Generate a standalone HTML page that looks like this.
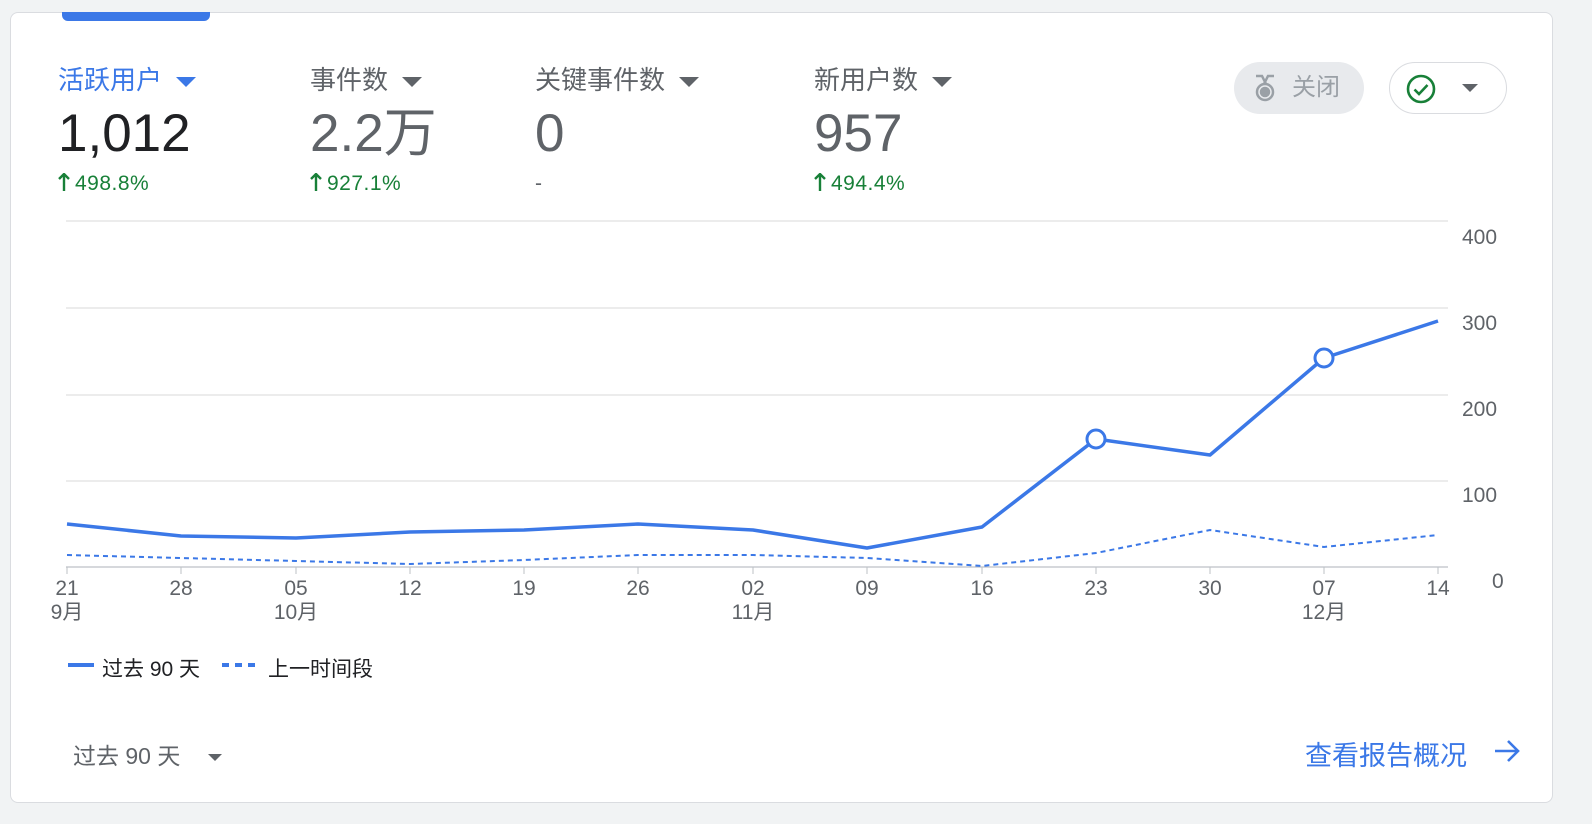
<!DOCTYPE html>
<html><head><meta charset="utf-8"><style>
body{margin:0;width:1592px;height:824px;background:#f1f3f4;font-family:"Liberation Sans","Noto Sans CJK SC",sans-serif;position:relative;overflow:hidden}
.card{position:absolute;left:10px;top:12px;width:1541px;height:789px;background:#fff;border:1px solid #dadce0;border-radius:8px}
.tab{position:absolute;left:62px;top:12px;width:148px;height:9px;background:#3b78e7;border-radius:0 0 6px 6px}
.m{position:absolute;top:60px}
.m .t{font-size:26px;color:#5f6368;white-space:nowrap}
.m .t.a{color:#3b78e7}
.caret{display:inline-block;width:0;height:0;border-left:10px solid transparent;border-right:10px solid transparent;border-top:10px solid #5f6368;margin-left:14px;vertical-align:middle}
.a .caret{border-top-color:#3b78e7}
.m .v{font-size:53px;color:#5f6368;margin-top:8px;line-height:58px}
.m .d{font-size:21px;color:#188038;margin-top:9px;letter-spacing:.5px;white-space:nowrap}
.m .d svg{vertical-align:-1px;margin-right:5px}
.ax{position:absolute;font-size:21px;color:#5f6368;text-align:center;line-height:24px}
</style></head><body>
<div class="card"></div>
<div class="tab"></div>
<div class="m" style="left:58px"><div class="t a">活跃用户<span class="caret"></span></div><div class="v" style="color:#202124">1,012</div><div class="d"><svg width="12" height="18" viewBox="0 0 12 18"><path d="M6 1v17M1 6l5-5 5 5" fill="none" stroke="#188038" stroke-width="2.4"/></svg>498.8%</div></div>
<div class="m" style="left:310px"><div class="t">事件数<span class="caret"></span></div><div class="v">2.2万</div><div class="d"><svg width="12" height="18" viewBox="0 0 12 18"><path d="M6 1v17M1 6l5-5 5 5" fill="none" stroke="#188038" stroke-width="2.4"/></svg>927.1%</div></div>
<div class="m" style="left:535px"><div class="t">关键事件数<span class="caret"></span></div><div class="v">0</div><div class="d" style="color:#5f6368">-</div></div>
<div class="m" style="left:814px"><div class="t">新用户数<span class="caret"></span></div><div class="v">957</div><div class="d"><svg width="12" height="18" viewBox="0 0 12 18"><path d="M6 1v17M1 6l5-5 5 5" fill="none" stroke="#188038" stroke-width="2.4"/></svg>494.4%</div></div>
<div style="position:absolute;left:1234px;top:62px;width:130px;height:52px;border-radius:26px;background:#e8eaed;color:#9aa0a6;font-size:24px;line-height:52px">
<svg style="position:absolute;left:18px;top:12px" width="26" height="28" viewBox="0 0 26 28" fill="none" stroke="#9aa0a6" stroke-width="2.5"><path d="M4 2h6l4 8M22 2h-6l-4 8"/><circle cx="13" cy="18" r="8"/><circle cx="13" cy="18" r="4" fill="#9aa0a6"/></svg>
<span style="position:absolute;left:58px">关闭</span></div>
<div style="position:absolute;left:1389px;top:62px;width:116px;height:50px;border-radius:26px;border:1.5px solid #dadce0;background:#fff">
<svg style="position:absolute;left:16px;top:11px" width="30" height="30" viewBox="0 0 30 30" fill="none" stroke="#188038" stroke-width="2.6"><circle cx="15" cy="15" r="13"/><path d="M8.5 15.5l4.5 4.5 8.5-9"/></svg>
<span class="caret" style="position:absolute;left:72px;top:21px;margin:0;border-width:8px 8px 0"></span></div>
<svg style="position:absolute;left:0;top:0" width="1592" height="824">
<g stroke="#e0e0e0" stroke-width="1.3">
<line x1="66" y1="221" x2="1448" y2="221"/><line x1="66" y1="308" x2="1448" y2="308"/><line x1="66" y1="395" x2="1448" y2="395"/><line x1="66" y1="481" x2="1448" y2="481"/></g>
<line x1="66" y1="567" x2="1448" y2="567" stroke="#bdc1c6" stroke-width="1.3"/>
<g stroke="#bdc1c6"><line x1="67" y1="567" x2="67" y2="574"/><line x1="181" y1="567" x2="181" y2="574"/><line x1="296" y1="567" x2="296" y2="574"/><line x1="410" y1="567" x2="410" y2="574"/><line x1="524" y1="567" x2="524" y2="574"/><line x1="638" y1="567" x2="638" y2="574"/><line x1="753" y1="567" x2="753" y2="574"/><line x1="867" y1="567" x2="867" y2="574"/><line x1="982" y1="567" x2="982" y2="574"/><line x1="1096" y1="567" x2="1096" y2="574"/><line x1="1210" y1="567" x2="1210" y2="574"/><line x1="1324" y1="567" x2="1324" y2="574"/><line x1="1438" y1="567" x2="1438" y2="574"/></g>
<polyline fill="none" stroke="#3b78e7" stroke-width="2" stroke-dasharray="5,4" points="67,555 181,558 296,561 410,564 524,560 638,555 753,555 867,558 982,566 1096,553 1210,530 1324,547 1438,535"/>
<polyline fill="none" stroke="#3b78e7" stroke-width="3.5" stroke-linejoin="round" points="67,524 181,536 296,538 410,532 524,530 638,524 753,530 867,548 982,527 1096,439 1210,455 1324,358 1438,321"/>
<circle cx="1096" cy="439" r="9" fill="#fff" stroke="#3b78e7" stroke-width="3"/>
<circle cx="1324" cy="358" r="9" fill="#fff" stroke="#3b78e7" stroke-width="3"/>
<line x1="68" y1="665" x2="94" y2="665" stroke="#3b78e7" stroke-width="4"/>
<line x1="222" y1="665" x2="256" y2="665" stroke="#3b78e7" stroke-width="4" stroke-dasharray="7,6"/>
<path d="M1495 751h22M1508 741l10 10-10 10" fill="none" stroke="#3b78e7" stroke-width="2.6"/>
</svg>
<div class="ax" style="left:1462px;top:226px">400</div>
<div class="ax" style="left:1462px;top:312px">300</div>
<div class="ax" style="left:1462px;top:398px">200</div>
<div class="ax" style="left:1462px;top:484px">100</div>
<div class="ax" style="left:1492px;top:570px">0</div>
<div class="ax" style="left:47px;top:577px;width:40px">21<br>9月</div>
<div class="ax" style="left:161px;top:577px;width:40px">28</div>
<div class="ax" style="left:268px;top:577px;width:56px">05<br>10月</div>
<div class="ax" style="left:390px;top:577px;width:40px">12</div>
<div class="ax" style="left:504px;top:577px;width:40px">19</div>
<div class="ax" style="left:618px;top:577px;width:40px">26</div>
<div class="ax" style="left:725px;top:577px;width:56px">02<br>11月</div>
<div class="ax" style="left:847px;top:577px;width:40px">09</div>
<div class="ax" style="left:962px;top:577px;width:40px">16</div>
<div class="ax" style="left:1076px;top:577px;width:40px">23</div>
<div class="ax" style="left:1190px;top:577px;width:40px">30</div>
<div class="ax" style="left:1296px;top:577px;width:56px">07<br>12月</div>
<div class="ax" style="left:1418px;top:577px;width:40px">14</div>
<div style="position:absolute;left:102px;top:653px;font-size:21px;color:#202124">过去 90 天</div>
<div style="position:absolute;left:268px;top:653px;font-size:21px;color:#202124">上一时间段</div>
<div style="position:absolute;left:73px;top:737px;font-size:23px;color:#5f6368">过去 90 天<span class="caret" style="margin-left:28px;border-width:7px 7px 0"></span></div>
<div style="position:absolute;left:1305px;top:734px;font-size:27px;color:#3b78e7">查看报告概况</div>
</body></html>
